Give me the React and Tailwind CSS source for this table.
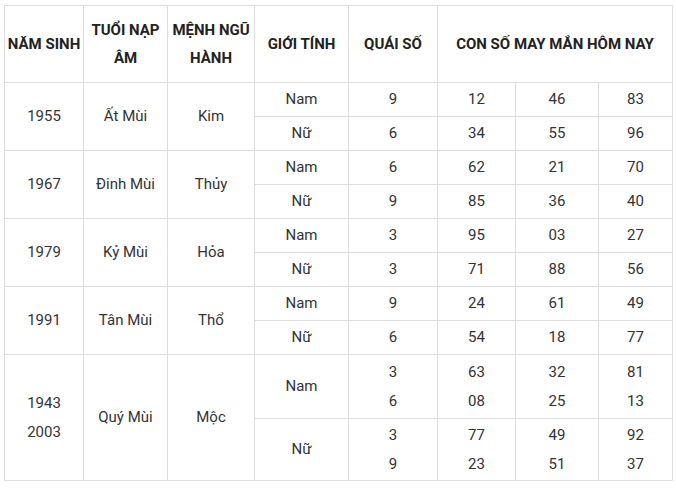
import React from 'react';

const GROUPS = [
  { year: ['1955'], tuoi: 'Ất Mùi', menh: 'Kim', rows: [
    { g: 'Nam', q: ['9'], n: [['12'], ['46'], ['83']] },
    { g: 'Nữ', q: ['6'], n: [['34'], ['55'], ['96']] },
  ] },
  { year: ['1967'], tuoi: 'Đinh Mùi', menh: 'Thủy', rows: [
    { g: 'Nam', q: ['6'], n: [['62'], ['21'], ['70']] },
    { g: 'Nữ', q: ['9'], n: [['85'], ['36'], ['40']] },
  ] },
  { year: ['1979'], tuoi: 'Kỷ Mùi', menh: 'Hỏa', rows: [
    { g: 'Nam', q: ['3'], n: [['95'], ['03'], ['27']] },
    { g: 'Nữ', q: ['3'], n: [['71'], ['88'], ['56']] },
  ] },
  { year: ['1991'], tuoi: 'Tân Mùi', menh: 'Thổ', rows: [
    { g: 'Nam', q: ['9'], n: [['24'], ['61'], ['49']] },
    { g: 'Nữ', q: ['6'], n: [['54'], ['18'], ['77']] },
  ] },
  { year: ['1943', '2003'], tuoi: 'Quý Mùi', menh: 'Mộc', rows: [
    { g: 'Nam', q: ['3', '6'], n: [['63', '08'], ['32', '25'], ['81', '13']], h: 'h-[64px]' },
    { g: 'Nữ', q: ['3', '9'], n: [['77', '23'], ['49', '51'], ['92', '37']], h: 'h-[62px]' },
  ] },
];

const td = 'border border-[#dddddd] text-center align-middle p-0';

function Lines({ items }) {
  return items.map((t, i) => (
    <div key={i} className="leading-[29px]">{t}</div>
  ));
}

export default function App() {
  return (
    <div className="bg-white w-[676px] h-[488px] pt-[5px] pl-[4px]" style={{ fontFamily: 'Roboto, "Liberation Sans", sans-serif' }}>
      <table className="table-fixed border-collapse w-[668px] text-[15px] text-[#333333]">
        <colgroup>
          <col className="w-[79px]" />
          <col className="w-[84px]" />
          <col className="w-[87px]" />
          <col className="w-[94px]" />
          <col className="w-[89px]" />
          <col className="w-[78px]" />
          <col className="w-[83px]" />
          <col className="w-[74px]" />
        </colgroup>
        <thead>
          <tr className="h-[77px] font-bold text-[#222222] leading-[28px]">
            <th className={td}>NĂM SINH</th>
            <th className={td}>TUỔI NẠP<br />ÂM</th>
            <th className={td}>MỆNH NGŨ<br />HÀNH</th>
            <th className={td}>GIỚI TÍNH</th>
            <th className={td}>QUÁI SỐ</th>
            <th className={td} colSpan={3}>CON SỐ MAY MẮN HÔM NAY</th>
          </tr>
        </thead>
        <tbody>
          {GROUPS.map((grp) =>
            grp.rows.map((r, i) => (
              <tr key={grp.year[0] + r.g} className={r.h || 'h-[34px]'}>
                {i === 0 && (
                  <>
                    <td className={td} rowSpan={2}><Lines items={grp.year} /></td>
                    <td className={td} rowSpan={2}>{grp.tuoi}</td>
                    <td className={td} rowSpan={2}>{grp.menh}</td>
                  </>
                )}
                <td className={td}>{r.g}</td>
                <td className={td}><Lines items={r.q} /></td>
                {r.n.map((col, k) => (
                  <td key={k} className={td}><Lines items={col} /></td>
                ))}
              </tr>
            ))
          )}
        </tbody>
      </table>
    </div>
  );
}
